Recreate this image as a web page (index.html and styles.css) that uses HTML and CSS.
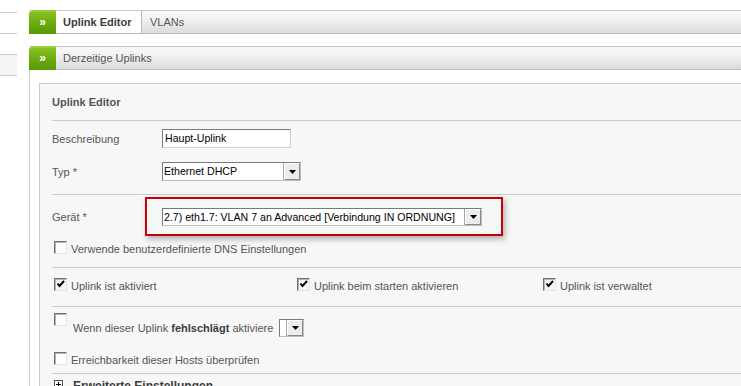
FILE: index.html
```html
<!DOCTYPE html>
<html>
<head>
<meta charset="utf-8">
<meta name="viewport" content="width=device-width, initial-scale=1">
<link rel="stylesheet" href="styles.css">
</head>
<body>
<div class="page">
  <div class="sidebar">
    <div class="side-item"></div>
    <div class="side-item"></div>
    <div class="side-item current"></div>
  </div>

  <div class="main">
    <div class="bar">
      <span class="go">&raquo;</span>
      <span class="tab active">Uplink Editor</span>
      <span class="tab">VLANs</span>
    </div>

    <div class="bar section">
      <span class="go">&raquo;</span>
      <span class="bar-title">Derzeitige Uplinks</span>
    </div>

    <div class="box">
      <div class="panel">
        <h3>Uplink Editor</h3>

        <div class="group first">
          <div class="row">
            <label class="lbl">Beschreibung</label>
            <span class="input">Haupt-Uplink</span>
          </div>
          <div class="row gap">
            <label class="lbl">Typ *</label>
            <span class="select w-typ"><span class="value">Ethernet DHCP</span><span class="btn"><svg width="7" height="4" viewBox="0 0 7 4"><path d="M0 0h7L3.5 4z" fill="#000"/></svg></span></span>
          </div>
        </div>

        <div class="group second">
          <div class="row">
            <label class="lbl">Gerät *</label>
            <div class="highlight">
              <span class="select w-dev"><span class="value">2.7) eth1.7: VLAN 7 an Advanced [Verbindung IN ORDNUNG]</span><span class="btn"><svg width="7" height="4" viewBox="0 0 7 4"><path d="M0 0h7L3.5 4z" fill="#000"/></svg></span></span>
            </div>
          </div>
          <div class="check-row dns">
            <span class="cb"></span><span class="txt">Verwende benutzerdefinierte DNS Einstellungen</span>
          </div>
        </div>

        <div class="group third">
          <div class="checks">
            <div class="check-row">
              <span class="cb on"><svg width="11" height="11" viewBox="0 0 11 11"><path d="M2.5 4.5l2 2.5 4.5-5" stroke="#000" stroke-width="2" fill="none"/></svg></span><span class="txt">Uplink ist aktiviert</span>
            </div>
            <div class="check-row">
              <span class="cb on"><svg width="11" height="11" viewBox="0 0 11 11"><path d="M2.5 4.5l2 2.5 4.5-5" stroke="#000" stroke-width="2" fill="none"/></svg></span><span class="txt">Uplink beim starten aktivieren</span>
            </div>
            <div class="check-row">
              <span class="cb on"><svg width="11" height="11" viewBox="0 0 11 11"><path d="M2.5 4.5l2 2.5 4.5-5" stroke="#000" stroke-width="2" fill="none"/></svg></span><span class="txt">Uplink ist verwaltet</span>
            </div>
          </div>
        </div>

        <div class="group fourth">
          <div class="fail-row">
            <span class="cb"></span>
            <span class="inline">&nbsp;Wenn dieser Uplink <b>fehlschlägt</b> aktiviere <span class="select w-small"><span class="value"></span><span class="btn"><svg width="7" height="4" viewBox="0 0 7 4"><path d="M0 0h7L3.5 4z" fill="#000"/></svg></span></span></span>
          </div>
          <div class="check-row hosts">
            <span class="cb"></span><span class="txt">Erreichbarkeit dieser Hosts überprüfen</span>
          </div>
        </div>

        <div class="group last">
          <div class="expand">
            <span class="plus"><svg width="9" height="9" viewBox="0 0 9 9"><rect x="0.5" y="0.5" width="8" height="8" fill="#fff" stroke="#555"/><path d="M2 4.5h5M4.5 2v5" stroke="#000"/></svg></span>
            <b>Erweiterte Einstellungen</b>
          </div>
        </div>
      </div>
    </div>
  </div>
</div>
</body>
</html>
```

FILE: styles.css
```css
html, body {
    overflow: hidden;
}

body {
    margin: 0;
    background: #fff;
    color: #555;
    font-family: "Liberation Sans", Arial, sans-serif;
    font-size: 11px;
}

.page {
    display: flex;
    gap: 12px;
    min-height: 386px;
}

/* left menu, mostly cut off */
.sidebar {
    width: 17px;
    padding-top: 12px;
    flex-shrink: 0;
}

.side-item {
    height: 20px;
    border-top: 1px solid #ccc;
}

.side-item.current {
    background: #f5f5f5;
    border-bottom: 1px solid #ccc;
}

.main {
    flex: 1;
    display: flex;
    flex-direction: column;
}

/* tab bars */
.bar {
    display: flex;
    align-items: center;
    height: 22px;
    margin-top: 10px;
    border-top: 1px solid #c8c8c8;
    border-bottom: 1px solid #bbb;
    background: linear-gradient(#f8f8f8, #f4f4f4 30%, #e9e9e9 60%, #dcdcdc);
}

.bar.section {
    margin-top: 12px;
}

.go {
    width: 27px;
    height: 24px;
    margin: -1px 0;
    display: flex;
    align-items: center;
    justify-content: center;
    color: #fff;
    font-weight: bold;
    font-size: 12px;
    background: linear-gradient(#a2d43f, #86c021 12%, #6cab0f 55%, #579a04);
    clip-path: polygon(3px 0, 100% 0, 100% 100%, 0 100%, 0 3px);
}

.tab {
    height: 22px;
    line-height: 22px;
    padding: 0 8px;
}

.tab.active {
    width: 78px;
    padding: 0 0 0 7px;
    background: #fff;
    color: #3c3c3c;
    font-weight: bold;
    border-right: 1px solid #bbb;
}

.bar-title {
    padding-left: 7px;
}

/* content box */
.box {
    flex: 1;
    border-left: 1px solid #ccc;
    padding: 13px 0 0 9px;
}

.panel {
    height: 100%;
    background: #f7f7f7;
    border-top: 1px solid #ccc;
    border-left: 1px solid #ccc;
    padding-left: 12px;
}

.panel h3 {
    margin: 0;
    height: 36px;
    line-height: 37px;
    font-size: 11px;
    color: #555;
    border-bottom: 1px solid #ccc;
}

.group {
    border-bottom: 1px solid #ccc;
}

.group.first { padding: 8px 0 13px; }
.group.second { padding: 2px 0 13px; }
.group.third { padding: 10px 0 15px; }
.group.fourth { padding: 6px 0 8px; }
.group.last { border-bottom: none; padding-top: 5px; }

.row {
    display: flex;
    align-items: center;
}

.row.gap {
    margin-top: 14px;
}

.lbl {
    width: 110px;
}

/* form controls, old windows look */
.input {
    box-sizing: border-box;
    width: 129px;
    height: 19px;
    line-height: 17px;
    padding-left: 2px;
    background: #fff;
    color: #000;
    font-size: 10.6px;
    border: 1px solid;
    border-color: #7a7a7a #d0d0d0 #d0d0d0 #7a7a7a;
}

.select {
    box-sizing: border-box;
    display: inline-flex;
    height: 19px;
    background: #fff;
    color: #000;
    font-size: 10.6px;
    font-weight: normal;
    border: 1px solid;
    border-color: #7a7a7a #bdbdbd #bdbdbd #7a7a7a;
    vertical-align: middle;
}

.select .value {
    flex: 1;
    line-height: 17px;
    padding-left: 1px;
    white-space: nowrap;
    overflow: hidden;
}

.select .btn {
    box-sizing: border-box;
    width: 16px;
    display: flex;
    align-items: center;
    justify-content: center;
    background: #ececec;
    border: 1px solid;
    border-color: #fff #8a8a8a #8a8a8a #fff;
    box-shadow: -1px 0 0 #a8a8a8;
}

.w-typ { width: 139px; }
.w-dev { width: 320px; height: 18px; }
.w-small { width: 25px; height: 18px; }

.highlight {
    margin-left: -17px;
    padding: 9px 19px 8px 15px;
    border: 2px solid #c4000c;
    box-shadow: 2px 3px 6px rgba(0, 0, 0, 0.3);
}

.check-row {
    display: flex;
    align-items: flex-start;
    height: 13px;
}

.cb {
    box-sizing: border-box;
    width: 13px;
    height: 13px;
    margin-left: 2px;
    flex-shrink: 0;
    background: #fff;
    border: 1px solid;
    border-color: #6f6f6f #e4e4e4 #e4e4e4 #6f6f6f;
    box-shadow: inset 1px 1px 0 #b4b4b4;
}

.cb svg {
    display: block;
}

.cb.on {
    background: #f4f4f4;
}

.txt {
    margin-left: 4px;
    padding-top: 2px;
    line-height: 13px;
    white-space: nowrap;
}

.check-row.dns {
    margin-top: 5px;
}

.checks {
    display: grid;
    grid-template-columns: 243px 246px auto;
}

.fail-row {
    display: flex;
    align-items: flex-start;
    height: 24px;
}

.inline {
    display: flex;
    align-items: center;
    height: 18px;
    margin: 6px 0 0 3px;
    white-space: pre;
}

.inline b {
    color: #3c3c3c;
}

.inline .select {
    margin-left: 3px;
}

.check-row.hosts {
    margin-top: 15px;
}

.expand {
    display: flex;
    align-items: flex-start;
    gap: 10px;
    margin-left: 2px;
    color: #3c3c3c;
    font-size: 12px;
    line-height: 14px;
}

.plus svg {
    display: block;
    margin-top: 1px;
}
```
